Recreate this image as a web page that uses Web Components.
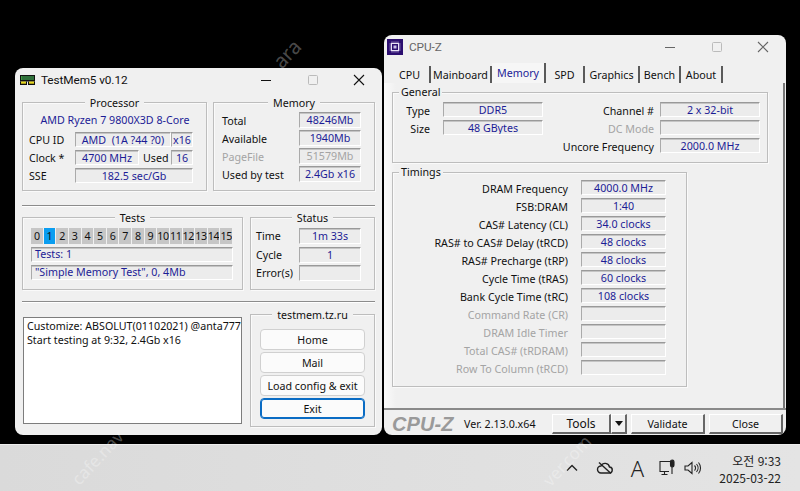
<!DOCTYPE html>
<html lang="ko">
<head>
<meta charset="utf-8">
<title>TestMem5 and CPU-Z</title>
<style>
  html, body { margin: 0; height: 100%; }
  body { background: #000; display: flex; flex-direction: column; font-family: "Noto Sans", sans-serif; overflow: hidden; position: relative; }
  main { position: relative; flex: 1; }
</style>
</head>
<body>
<main>
  <testmem-window></testmem-window>
  <cpuz-window></cpuz-window>
</main>
<task-bar></task-bar>
<water-mark style="left: 272px; top: 44px">ara</water-mark>
<water-mark style="left: 64px; top: 449px; font-size: 17px">cafe.nav</water-mark>
<water-mark style="left: 536px; top: 452px; font-size: 17px">ver.com</water-mark>

<script>
const UI_FONT = `"Noto Sans", "Liberation Sans", sans-serif`;

// raised title bar with the three caption buttons
class DeskWindow extends HTMLElement {
  constructor() {
    super();
    this.attachShadow({ mode: "open" }).innerHTML = `
      <style>
        :host { display: flex; flex-direction: column; background: #f0f0f0; border-radius: 8px; overflow: hidden; font: 10.7px ${UI_FONT}; color: #111; box-sizing: border-box; }
        .bar { height: 28px; box-sizing: border-box; padding-bottom: 4px; flex: none; display: flex; align-items: center; font: 11.8px Roboto, sans-serif; letter-spacing: -.1px; }
        :host([inactive]) .bar { color: #666; }
        .name { flex: 1; }
        .cap { width: 47px; height: 24px; display: flex; align-items: center; justify-content: center; }
        .cap:last-child { width: 46px; }
        svg { display: block; stroke: #111; fill: none; }
        :host([inactive]) svg { stroke: #666; }
        svg.max, :host([inactive]) svg.max { stroke: #bbb; }
        .body { flex: 1; min-height: 0; display: flex; flex-direction: column; }
      </style>
      <div class="bar" part="bar">
        <slot name="icon"></slot>
        <span class="name"><slot name="title"></slot></span>
        <span class="cap"><svg width="12" height="12"><path d="M1 6.5h10"/></svg></span>
        <span class="cap"><svg class="max" width="12" height="12"><rect x="1.5" y="1.5" width="9" height="9" rx="1"/></svg></span>
        <span class="cap"><svg width="12" height="12"><path d="M1 1l10 10M11 1L1 11" stroke-width="1.1"/></svg></span>
      </div>
      <div class="body"><slot></slot></div>`;
  }
}

// etched frame with the caption sitting on its top line
class GroupBox extends HTMLElement {
  static get observedAttributes() { return ["label"]; }
  constructor() {
    super();
    this.attachShadow({ mode: "open" }).innerHTML = `
      <style>
        :host { display: block; position: relative; box-sizing: border-box; border: 1px solid #bdbdbd; box-shadow: inset 1px 1px 0 #fafafa, 1px 1px 0 #fafafa; }
        .cap { position: absolute; top: -8px; left: 0; right: 0; display: flex; justify-content: center; line-height: 16px; }
        .cap span { background: #f0f0f0; padding: 0 5px; }
        :host([left]) .cap { justify-content: flex-start; left: 6px; top: -9px; }
        :host([left]) .cap span { padding: 0 2px; }
      </style>
      <div class="cap"><span id="t"></span></div>
      <slot></slot>`;
  }
  attributeChangedCallback(name, oldValue, newValue) {
    this.shadowRoot.querySelector("#t").textContent = newValue;
  }
}

// sunken read-only value box
class ValueField extends HTMLElement {
  constructor() {
    super();
    this.attachShadow({ mode: "open" }).innerHTML = `
      <style>
        :host { display: flex; align-items: center; justify-content: center; box-sizing: border-box; background: #ececec; color: #1c1c96; white-space: nowrap; padding-top: 1px;
          border-top: 1px solid #999; border-left: 1px solid #aaa; border-right: 1px solid #fff; border-bottom: 1px solid #fff; box-shadow: inset 0 1px 0 #c4c4c4; overflow: hidden; line-height: 1; }
        :host([start]) { justify-content: flex-start; padding-left: 3px; }
        :host([dim]) { color: #a4a4a4; }
      </style>
      <slot></slot>`;
  }
}

class RoundButton extends HTMLElement {
  constructor() {
    super();
    this.attachShadow({ mode: "open" }).innerHTML = `
      <style>
        :host { display: flex; align-items: center; justify-content: center; box-sizing: border-box; height: 21px; background: #fbfbfb; border: 1px solid #d0d0d0; border-radius: 4px; color: #111; }
        :host([focused]) { border: 1px solid #0a6cc4; box-shadow: inset 0 0 0 1px #0a6cc4; }
      </style>
      <slot></slot>`;
  }
}

// numbered cells, one of them lit
class TestStrip extends HTMLElement {
  constructor() {
    super();
    const cells = Array.from({ length: 16 }, (_, i) => `<span class="${i === 1 ? "on" : ""}">${i}</span>`).join("");
    this.attachShadow({ mode: "open" }).innerHTML = `
      <style>
        :host { display: grid; grid-template-columns: repeat(16, 1fr); height: 16px; }
        span { background: #c6c6c6; border-right: 1px solid #f0f0f0; display: flex; align-items: center; justify-content: center; color: #111; letter-spacing: -.3px; line-height: 1; overflow: hidden; padding-top: 1px; }
        .on { background: #0a9df0; }
      </style>${cells}`;
  }
}

// faint diagonal site stamp lying over the shot
class WaterMark extends HTMLElement {
  constructor() {
    super();
    this.attachShadow({ mode: "open" }).innerHTML = `
      <style>
        :host { position: absolute; font: 20px "Noto Sans", sans-serif; color: rgba(255, 255, 255, .3); transform: rotate(-47deg); pointer-events: none; white-space: nowrap; line-height: 1; }
      </style>
      <slot></slot>`;
  }
}

class TestmemWindow extends HTMLElement {
  constructor() {
    super();
    this.attachShadow({ mode: "open" }).innerHTML = `
      <style>
        :host { position: absolute; left: 15px; top: 68px; width: 367px; height: 367px; display: block; }
        desk-window { height: 100%; }
        .icon { margin: 0 6px 0 5px; display: block; }
        .pad { padding: 6px 7px 0; display: flex; flex-direction: column; }
        .row { display: flex; }
        hr { border: 0; border-top: 1px solid #8c8c8c; border-bottom: 1px solid #fff; margin: 0; height: 0; }
        .proc { width: 185px; height: 89px; margin-right: 6px; }
        .proc .in { padding: 7px 0 0 6px; display: grid; grid-template-columns: 46px 64px 30px 2px 22px; grid-template-rows: 19px 15px 15px 15px; row-gap: 3px; align-items: center; }
        .proc .in > * { height: 100%; }
        .proc .in > span { display: flex; align-items: center; white-space: nowrap; }
        .cpu { grid-column: 1 / -1; justify-content: center; color: #1c1c96; padding-left: 8px; }
        .mem { width: 162px; height: 89px; }
        .mem .in, .stat .in { display: grid; grid-template-columns: 77px 62px; grid-auto-rows: 16px; row-gap: 2px; align-items: center; }
        .mem .in { padding: 9px 0 0 8px; }
        .mem span { padding-top: 2px; }
        .stat .in { padding: 10px 0 0 5px; grid-auto-rows: 16px; row-gap: 2.5px; grid-template-columns: 43px 62px; }
        value-field { height: 100%; }
        .off { color: #a4a4a4; }
        .tests { width: 221px; height: 73px; margin-right: 7px; }
        .tests .in { padding: 10px 0 0 8px; width: 202px; display: flex; flex-direction: column; gap: 2.5px; }
        .tests value-field { height: 15.5px; }
        .stat { width: 125px; height: 73px; }
        .log { width: 219px; height: 107px; margin: 3px 8px 0 1px; box-sizing: border-box; background: #fff; border: 1px solid #7d7d7d; padding: 1px 3px; line-height: 14px; white-space: nowrap; overflow: hidden; color: #111; }
        .links { width: 125px; height: 113px; }
        .links .in { padding: 14px 9px 0; display: flex; flex-direction: column; gap: 2px; }
      </style>
      <desk-window>
        <svg class="icon" slot="icon" width="15" height="10" viewBox="0 0 15 10">
          <rect width="15" height="6.5" fill="#111"/><path d="M1 1h13v4H1z" fill="#3f9a3f"/>
          <path d="M3 1v4M5 1v4M7 1v4M9 1v4M11 1v4M13 1v4" stroke="#123" stroke-width=".7"/>
          <rect y="6.5" width="7" height="3.5" fill="#111"/><rect x="8" y="6.5" width="7" height="3.5" fill="#111"/>
          <rect x="1" y="6.5" width="5" height="2.2" fill="#e8d820"/><rect x="9" y="6.5" width="5" height="2.2" fill="#e8d820"/>
        </svg>
        <span slot="title">TestMem5 v0.12</span>
        <div class="pad">
          <div class="row">
            <group-box class="proc" label="Processor">
              <div class="in">
                <span class="cpu">AMD Ryzen 7 9800X3D 8-Core</span>
                <span>CPU ID</span><value-field style="grid-column: 2 / 5">AMD&nbsp; (1A ?44 ?0)</value-field><value-field>x16</value-field>
                <span>Clock *</span><value-field>4700 MHz</value-field><span style="grid-column: 3 / 5; padding-left: 4px">Used</span><value-field>16</value-field>
                <span>SSE</span><value-field style="grid-column: 2 / 6">182.5 sec/Gb</value-field>
              </div>
            </group-box>
            <group-box class="mem" label="Memory">
              <div class="in">
                <span>Total</span><value-field>48246Mb</value-field>
                <span>Available</span><value-field>1940Mb</value-field>
                <span class="off">PageFile</span><value-field dim>51579Mb</value-field>
                <span>Used by test</span><value-field>2.4Gb x16</value-field>
              </div>
            </group-box>
          </div>
          <hr style="margin-top: 14px">
          <div class="row" style="margin-top: 10px">
            <group-box class="tests" label="Tests">
              <div class="in">
                <test-strip></test-strip>
                <value-field start>Tests: 1</value-field>
                <value-field start>"Simple Memory Test", 0, 4Mb</value-field>
              </div>
            </group-box>
            <group-box class="stat" label="Status">
              <div class="in">
                <span>Time</span><value-field>1m 33s</value-field>
                <span>Cycle</span><value-field>1</value-field>
                <span>Error(s)</span><value-field></value-field>
              </div>
            </group-box>
          </div>
          <hr style="margin-top: 11px">
          <div class="row" style="margin-top: 11px">
            <div class="log">Customize: ABSOLUT(01102021) @anta777<br>Start testing at 9:32, 2.4Gb x16</div>
            <group-box class="links" label="testmem.tz.ru">
              <div class="in">
                <round-button>Home</round-button>
                <round-button>Mail</round-button>
                <round-button>Load config &amp; exit</round-button>
                <round-button focused>Exit</round-button>
              </div>
            </group-box>
          </div>
        </div>
      </desk-window>`;
  }
}

const TIMINGS = [
  ["DRAM Frequency", "4000.0 MHz"],
  ["FSB:DRAM", "1:40"],
  ["CAS# Latency (CL)", "34.0 clocks"],
  ["RAS# to CAS# Delay (tRCD)", "48 clocks"],
  ["RAS# Precharge (tRP)", "48 clocks"],
  ["Cycle Time (tRAS)", "60 clocks"],
  ["Bank Cycle Time (tRC)", "108 clocks"],
  ["Command Rate (CR)", ""],
  ["DRAM Idle Timer", ""],
  ["Total CAS# (tRDRAM)", ""],
  ["Row To Column (tRCD)", ""],
];

class CpuzWindow extends HTMLElement {
  constructor() {
    super();
    const rows = TIMINGS.map(([k, v]) => `<span class="${v ? "" : "off"}">${k}</span><value-field>${v}</value-field>`).join("");
    const tabs = [["CPU", 41], ["Mainboard", 61], ["Memory", 54], ["SPD", 39], ["Graphics", 55], ["Bench", 41], ["About", 42]]
      .map(([t, w]) => `<span class="tab${t === "Memory" ? " on" : ""}" style="width:${w}px">${t}</span>`).join("");
    this.attachShadow({ mode: "open" }).innerHTML = `
      <style>
        :host { position: absolute; left: 384px; top: 35px; width: 402px; height: 400px; display: block; }
        desk-window { height: 100%; }
        .icon { margin: 0 6px 0 3px; display: block; }
        .tabs { display: flex; height: 20px; padding-left: 6px; align-items: flex-end; }
        .tab { box-sizing: border-box; height: 17px; display: flex; align-items: center; justify-content: center; border-right: 2px solid #5a5a5a; color: #111; padding-top: 1px; }
        .tab.on { height: 20px; color: #1c1c96; padding-bottom: 2px; background: #f6f6f6; }
        .panel { height: 325px; box-sizing: border-box; border-right: 2px solid #777; margin-right: 1px; padding: 9px 15px 0 8px; background: linear-gradient(90deg, #fafafa, #f0f0f0 12px); }
        .gen { box-sizing: border-box; height: 69px; padding: 9px 6px 0 0; display: grid; grid-template-columns: 37px 13px 100px 111px 6px 100px; grid-template-rows: 15px 15px 15px; row-gap: 3px; align-items: center; }
        .gen value-field, .tim value-field { height: 100%; }
        .gen span { text-align: right; white-space: nowrap; padding-top: 2px; }
        .tim { width: 295px; height: 215px; margin-top: 9px; padding: 7px 0 0 0; display: grid; grid-template-columns: 175px 13px 85px; grid-auto-rows: 15px; row-gap: 3px; align-items: center; }
        .tim span { grid-column: 1; text-align: right; white-space: nowrap; padding-top: 2px; }
        .tim value-field { grid-column: 3; }
        .off { color: #a4a4a4; }
        .foot { height: 27px; box-sizing: border-box; border-top: 2px solid #8a8a8a; display: flex; align-items: center; padding: 3px 3px 0 8px; }
        .logo { font: italic bold 20px "Liberation Sans", sans-serif; color: #9a9a9a; letter-spacing: .1px; width: 72px; white-space: nowrap; }
        .ver { width: 88px; white-space: nowrap; }
        .btn { box-sizing: border-box; height: 20px; display: flex; align-items: center; justify-content: center; background: #f0f0f0; border-top: 1px solid #fff; border-left: 1px solid #fff; border-right: 2px solid #666; border-bottom: 2px solid #666; }
      </style>
      <desk-window inactive>
        <svg class="icon" slot="icon" width="16" height="16" viewBox="0 0 16 16">
          <rect width="16" height="16" fill="#2c0e70"/>
          <rect x="4.5" y="4.5" width="7" height="7" fill="#2c0e70" stroke="#e8e2f6"/><rect x="6.5" y="6.5" width="3" height="3" fill="#c8c0e8"/>
          <path d="M5 2.5v1.5M7 2.5v1.5M9 2.5v1.5M11 2.5v1.5M5 12v1.5M7 12v1.5M9 12v1.5M11 12v1.5M2.5 5H4M2.5 7H4M2.5 9H4M2.5 11H4M12 5h1.5M12 7h1.5M12 9h1.5M12 11h1.5" stroke="#cfc4ea" stroke-width=".8"/>
        </svg>
        <span slot="title">CPU-Z</span>
        <div class="tabs">${tabs}</div>
        <div class="panel">
          <group-box left label="General">
            <div class="gen">
              <span style="grid-column: 1">Type</span><value-field style="grid-column: 3">DDR5</value-field>
              <span style="grid-column: 4">Channel #</span><value-field style="grid-column: 6">2 x 32-bit</value-field>
              <span style="grid-column: 1">Size</span><value-field style="grid-column: 3">48 GBytes</value-field>
              <span class="off" style="grid-column: 4">DC Mode</span><value-field style="grid-column: 6"></value-field>
              <span style="grid-column: 3 / 5">Uncore Frequency</span><value-field style="grid-column: 6">2000.0 MHz</value-field>
            </div>
          </group-box>
          <group-box left label="Timings" class="tim">${rows}</group-box>
        </div>
        <div class="foot">
          <span class="logo">CPU-Z</span>
          <span class="ver">Ver. 2.13.0.x64</span>
          <span class="btn" style="width: 59px; font-size: 12px">Tools</span>
          <span class="btn" style="width: 16px; margin-right: 4px"><svg width="8" height="5"><path d="M0 0h8L4 5z" fill="#111" stroke="none"/></svg></span>
          <span class="btn" style="width: 74px; margin-right: 4px">Validate</span>
          <span class="btn" style="width: 74px">Close</span>
        </div>
      </desk-window>`;
  }
}

class TaskBar extends HTMLElement {
  constructor() {
    super();
    this.attachShadow({ mode: "open" }).innerHTML = `
      <style>
        :host { flex: none; height: 47px; background: linear-gradient(90deg, #dadada, #e4e4e4); display: flex; align-items: center; justify-content: flex-end; padding-right: 19px; color: #222; border-top: 1px solid #eee; box-sizing: border-box; font: 12px "Noto Sans CJK KR", "Noto Sans", sans-serif; }
        svg { display: block; fill: none; stroke: #222; stroke-width: 1.1; }
        .a { font: 300 22px "Noto Sans", sans-serif; width: 14px; text-align: center; line-height: 1; }
        .clock { text-align: right; line-height: 17px; margin-left: 17px; margin-top: 1px; white-space: nowrap; }
      </style>
      <svg width="12" height="8" viewBox="0 0 12 8" style="margin-right: 18px"><path d="M1 6.5l5-5 5 5" stroke-width="1.4"/></svg>
      <svg width="18" height="14" viewBox="0 0 18 14" style="margin-right: 16px"><path d="M5 12h8a3 3 0 0 0 .5-6A4.5 4.5 0 0 0 5 5a3.5 3.5 0 0 0 0 7z" stroke-width="1.4"/><path d="M3 1.5l12 11" stroke-width="1.4"/></svg>
      <span class="a" style="margin-right: 15px">A</span>
      <svg width="16" height="18" viewBox="0 0 16 18" style="margin-right: 9px"><path d="M10 12.5H1v-10h10M5.5 12.5v3M2.5 15.5h6"/><rect x="11.5" y="1" width="3.5" height="7" rx="1.7" fill="#222"/><path d="M13 8v7"/></svg>
      <svg width="18" height="14" viewBox="0 0 18 14"><path d="M1 5v4h3l4 3.5v-11L4 5z"/><path d="M10.5 4.5a3.5 3.5 0 0 1 0 5M12.5 3a6 6 0 0 1 0 8M14.5 1.5a8.5 8.5 0 0 1 0 11"/></svg>
      <div class="clock">오전 9:33<br>2025-03-22</div>`;
  }
}

customElements.define("desk-window", DeskWindow);
customElements.define("group-box", GroupBox);
customElements.define("value-field", ValueField);
customElements.define("round-button", RoundButton);
customElements.define("test-strip", TestStrip);
customElements.define("water-mark", WaterMark);
customElements.define("testmem-window", TestmemWindow);
customElements.define("cpuz-window", CpuzWindow);
customElements.define("task-bar", TaskBar);
</script>
</body>
</html>
